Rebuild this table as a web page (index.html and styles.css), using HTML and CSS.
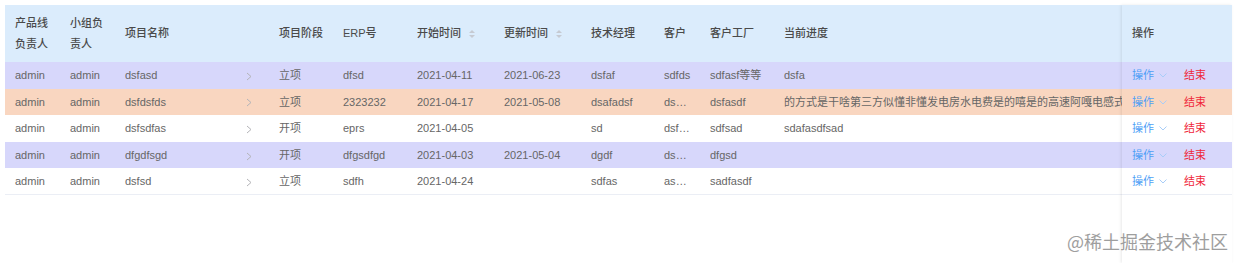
FILE: index.html
```html
<!DOCTYPE html>
<html lang="zh-CN">
<head>
<meta charset="utf-8">
<link rel="stylesheet" href="styles.css">
</head>
<body>
<div class="page">
  <div class="table-wrap">
    <table class="grid main">
      <colgroup>
        <col class="w55"><col class="w55"><col class="w154"><col class="w64"><col class="w74"><col class="w87"><col class="w87"><col class="w73"><col class="w46"><col class="w74"><col class="w348">
      </colgroup>
      <thead>
        <tr>
          <th>产品线<br>负责人</th>
          <th>小组负<br>责人</th>
          <th>项目名称</th>
          <th>项目阶段</th>
          <th>ERP号</th>
          <th><span class="sortable">开始时间<span class="caret"><i class="up"></i><i class="down"></i></span></span></th>
          <th><span class="sortable">更新时间<span class="caret"><i class="up"></i><i class="down"></i></span></span></th>
          <th>技术经理</th>
          <th>客户</th>
          <th>客户工厂</th>
          <th>当前进度</th>
        </tr>
      </thead>
      <tbody>
        <tr class="lav">
          <td>admin</td><td>admin</td>
          <td><div class="name"><span>dsfasd</span><svg class="arrow" width="6" height="9" viewBox="0 0 6 9"><path d="M1 1 L5 4.5 L1 8" fill="none" stroke="#b4b4b8" stroke-width="1"/></svg></div></td>
          <td>立项</td><td>dfsd</td><td>2021-04-11</td><td>2021-06-23</td><td>dsfaf</td><td>sdfds</td><td>sdfasf等等</td><td>dsfa</td>
        </tr>
        <tr class="peach">
          <td>admin</td><td>admin</td>
          <td><div class="name"><span>dsfdsfds</span><svg class="arrow" width="6" height="9" viewBox="0 0 6 9"><path d="M1 1 L5 4.5 L1 8" fill="none" stroke="#b4b4b8" stroke-width="1"/></svg></div></td>
          <td>立项</td><td>2323232</td><td>2021-04-17</td><td>2021-05-08</td><td>dsafadsf</td><td>dsafdsf</td><td>dsfasdf</td><td>的方式是干啥第三方似懂非懂发电房水电费是的嘻是的高速阿嘎电感式</td>
        </tr>
        <tr>
          <td>admin</td><td>admin</td>
          <td><div class="name"><span>dsfsdfas</span><svg class="arrow" width="6" height="9" viewBox="0 0 6 9"><path d="M1 1 L5 4.5 L1 8" fill="none" stroke="#b4b4b8" stroke-width="1"/></svg></div></td>
          <td>开项</td><td>eprs</td><td>2021-04-05</td><td></td><td>sd</td><td>dsfsdf</td><td>sdfsad</td><td>sdafasdfsad</td>
        </tr>
        <tr class="lav">
          <td>admin</td><td>admin</td>
          <td><div class="name"><span>dfgdfsgd</span><svg class="arrow" width="6" height="9" viewBox="0 0 6 9"><path d="M1 1 L5 4.5 L1 8" fill="none" stroke="#b4b4b8" stroke-width="1"/></svg></div></td>
          <td>开项</td><td>dfgsdfgd</td><td>2021-04-03</td><td>2021-05-04</td><td>dgdf</td><td>dsgsdfg</td><td>dfgsd</td><td></td>
        </tr>
        <tr>
          <td>admin</td><td>admin</td>
          <td><div class="name"><span>dsfsd</span><svg class="arrow" width="6" height="9" viewBox="0 0 6 9"><path d="M1 1 L5 4.5 L1 8" fill="none" stroke="#b4b4b8" stroke-width="1"/></svg></div></td>
          <td>立项</td><td>sdfh</td><td>2021-04-24</td><td></td><td>sdfas</td><td>asdfasd</td><td>sadfasdf</td><td></td>
        </tr>
      </tbody>
    </table>
    <div class="fixed">
      <table class="grid">
        <thead><tr><th>操作</th></tr></thead>
        <tbody>
          <tr class="lav"><td><div class="ops"><span class="op">操作<svg class="chev" width="8" height="5" viewBox="0 0 8 5"><path d="M0.5 0.5 L4 4 L7.5 0.5" fill="none" stroke="#a8cdf8" stroke-width="1"/></svg></span><span class="end">结束</span></div></td></tr>
          <tr class="peach"><td><div class="ops"><span class="op">操作<svg class="chev" width="8" height="5" viewBox="0 0 8 5"><path d="M0.5 0.5 L4 4 L7.5 0.5" fill="none" stroke="#a8cdf8" stroke-width="1"/></svg></span><span class="end">结束</span></div></td></tr>
          <tr><td><div class="ops"><span class="op">操作<svg class="chev" width="8" height="5" viewBox="0 0 8 5"><path d="M0.5 0.5 L4 4 L7.5 0.5" fill="none" stroke="#a8cdf8" stroke-width="1"/></svg></span><span class="end">结束</span></div></td></tr>
          <tr class="lav"><td><div class="ops"><span class="op">操作<svg class="chev" width="8" height="5" viewBox="0 0 8 5"><path d="M0.5 0.5 L4 4 L7.5 0.5" fill="none" stroke="#a8cdf8" stroke-width="1"/></svg></span><span class="end">结束</span></div></td></tr>
          <tr><td><div class="ops"><span class="op">操作<svg class="chev" width="8" height="5" viewBox="0 0 8 5"><path d="M0.5 0.5 L4 4 L7.5 0.5" fill="none" stroke="#a8cdf8" stroke-width="1"/></svg></span><span class="end">结束</span></div></td></tr>
        </tbody>
      </table>
    </div>
  </div>
  <div class="watermark">@稀土掘金技术社区</div>
</div>
</body>
</html>
```

FILE: styles.css
```css
* { box-sizing: border-box; }
html, body { margin: 0; padding: 0; background: #fff; }
body {
  font-family: "Liberation Sans", "Noto Sans CJK SC", sans-serif;
  font-size: 11px;
  color: #666;
  width: 1240px;
  height: 263px;
  overflow: hidden;
}
.page {
  position: relative;
  height: 263px;
  padding: 5px 0 0 5px;
}
.table-wrap {
  display: flex;
  align-items: flex-start;
  width: 1227px;
}
.grid {
  border-collapse: collapse;
  table-layout: fixed;
  border-bottom: 1px solid #ebeef5;
}
.main { width: 1117px; }
.w55 { width: 55px; }
.w154 { width: 154px; }
.w64 { width: 64px; }
.w74 { width: 74px; }
.w87 { width: 87px; }
.w73 { width: 73px; }
.w46 { width: 46px; }
.w348 { width: 348px; }
.grid th {
  background: #dbecfc;
  height: 57px;
  padding: 0 9px 0 10px;
  text-align: left;
  font-weight: 500;
  color: #4a4a4a;
  line-height: 21px;
  white-space: nowrap;
}
.grid td {
  height: 26.6px;
  padding: 0 9px 0 10px;
  line-height: 16px;
  white-space: nowrap;
  overflow: hidden;
  text-overflow: ellipsis;
}
.main td:last-child { text-overflow: clip; padding-right: 0; }
tr.lav td { background: #d7d7fb; }
tr.peach td { background: #f9d6c0; }
.name {
  display: flex;
  align-items: center;
  justify-content: space-between;
  padding-right: 8px;
}
.arrow { margin-top: 2px; }
.sortable {
  display: inline-flex;
  align-items: center;
}
.caret {
  display: inline-flex;
  flex-direction: column;
  gap: 2px;
  margin-left: 8px;
}
.caret i {
  display: block;
  width: 0;
  height: 0;
  border-left: 3.5px solid transparent;
  border-right: 3.5px solid transparent;
}
.caret .up { border-bottom: 3.5px solid #c6cad2; }
.caret .down { border-top: 3.5px solid #c6cad2; }
.fixed {
  width: 110px;
  height: 258px;
  background: #fff;
  box-shadow: -1px 0 3px rgba(0, 0, 0, 0.09);
}
.fixed .grid { width: 110px; }
.ops {
  display: flex;
  align-items: center;
}
.op {
  color: #4f9ff6;
  display: inline-flex;
  align-items: center;
}
.chev { margin-left: 5px; margin-top: 1px; }
.end {
  color: #f0283c;
  margin-left: 17px;
}
.watermark {
  position: absolute;
  right: 12px;
  bottom: 11px;
  font-family: "Noto Sans CJK SC", sans-serif;
  font-size: 18px;
  line-height: 22px;
  color: #9e9e9e;
}
```
